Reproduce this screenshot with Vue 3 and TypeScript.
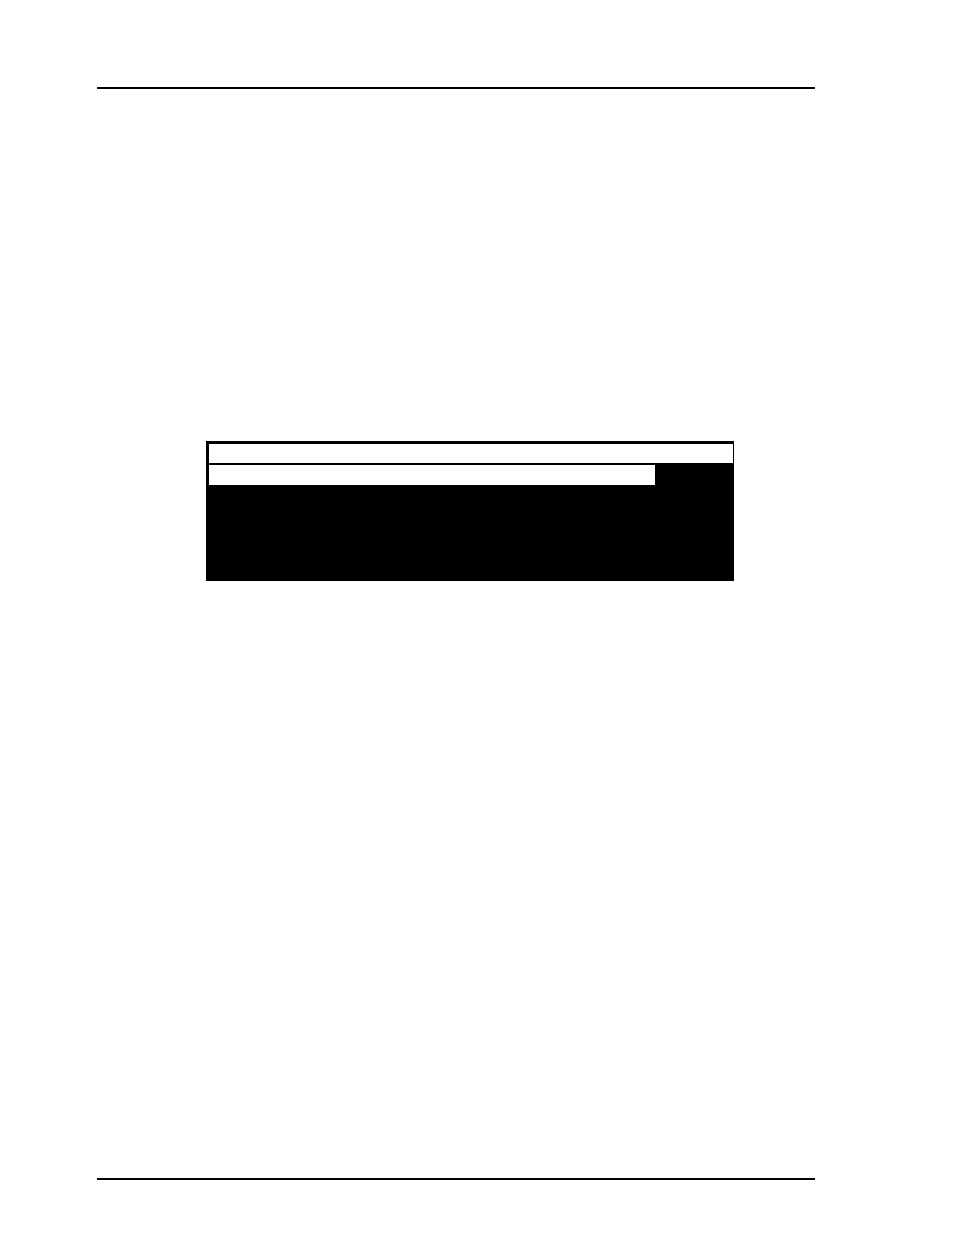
<script setup lang="ts">
</script>

<template>
  <div class="page">
    <header class="rule"></header>
    <main class="content">
      <section class="panel">
        <div class="title-row"></div>
        <div class="entry-row">
          <div class="entry-field"></div>
          <div class="entry-end"></div>
        </div>
        <div class="panel-body"></div>
      </section>
    </main>
    <footer class="rule"></footer>
  </div>
</template>

<style>
body {
  margin: 0;
  background: #fff;
}
</style>

<style scoped>
.page {
  box-sizing: border-box;
  display: flex;
  flex-direction: column;
  min-height: 100vh;
  padding: 87px 139px 55px 97px;
  background: #fff;
  font-family: "Liberation Sans", Arial, sans-serif;
}

.rule {
  flex: none;
  height: 2px;
  background: #000;
}

.content {
  flex: 1;
  padding: 352px 81px 0 109px;
}

.panel {
  display: flex;
  flex-direction: column;
  gap: 2px;
  padding: 3px 1px 0 3px;
  background: #000;
}

.title-row {
  height: 19px;
  background: #fff;
}

.entry-row {
  display: flex;
  height: 20px;
}

.entry-field {
  flex: 1;
  background: #fff;
}

.entry-end {
  width: 78px;
}

.panel-body {
  height: 94px;
}
</style>
